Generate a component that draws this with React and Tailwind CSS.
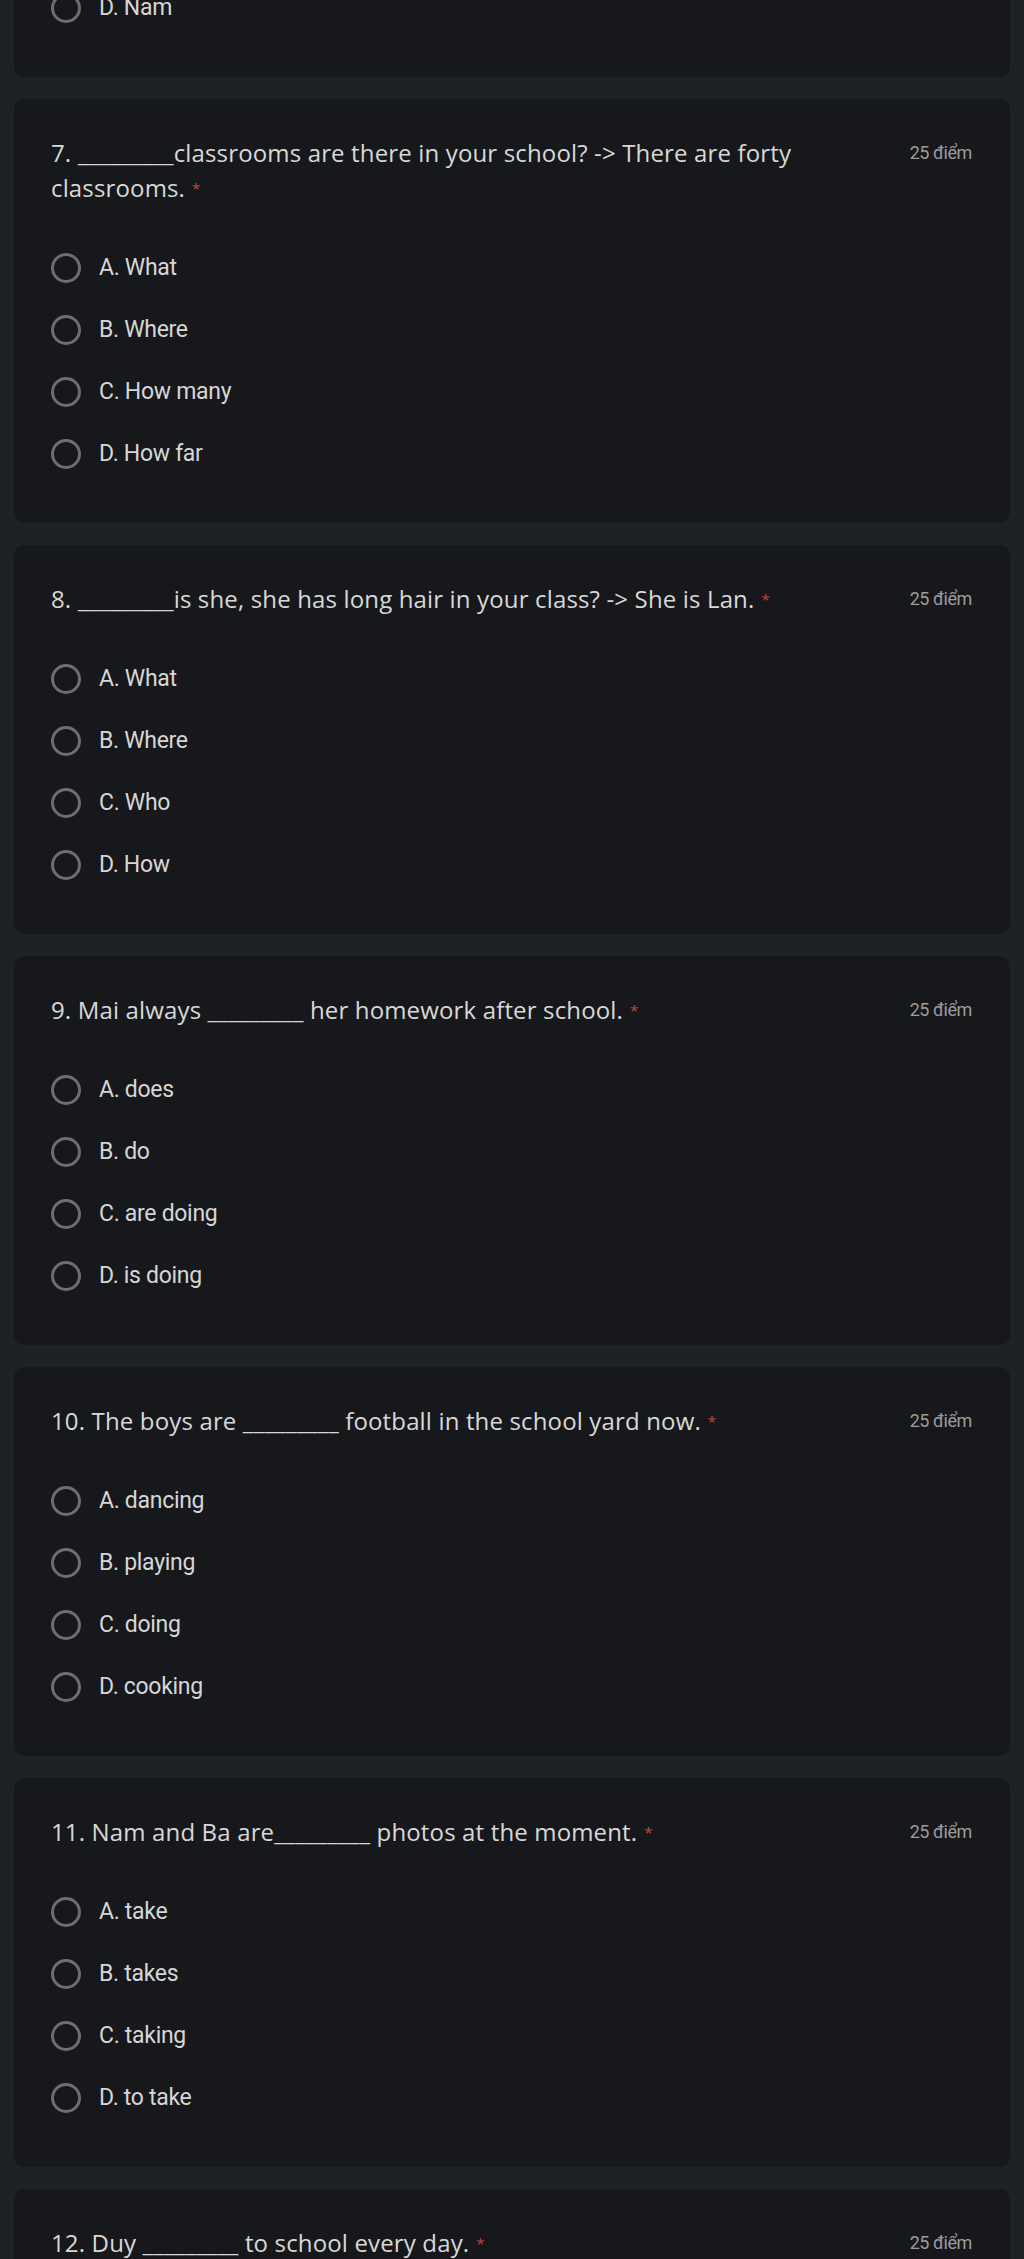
import React from 'react';

const questions = [
  {
    id: 7,
    title: '7. _________classrooms are there in your school? -> There are forty classrooms.',
    options: ['A. What', 'B. Where', 'C. How many', 'D. How far'],
  },
  {
    id: 8,
    title: '8. _________is she, she has long hair in your class? -> She is Lan.',
    options: ['A. What', 'B. Where', 'C. Who', 'D. How'],
  },
  {
    id: 9,
    title: '9. Mai always _________ her homework after school.',
    options: ['A. does', 'B. do', 'C. are doing', 'D. is doing'],
  },
  {
    id: 10,
    title: '10. The boys are _________ football in the school yard now.',
    options: ['A. dancing', 'B. playing', 'C. doing', 'D. cooking'],
  },
  {
    id: 11,
    title: '11. Nam and Ba are_________ photos at the moment.',
    options: ['A. take', 'B. takes', 'C. taking', 'D. to take'],
  },
  {
    id: 12,
    title: '12. Duy _________ to school every day.',
    options: ['A. go', 'B. goes', 'C. going', 'D. is going'],
  },
];

function Option({ label }) {
  return (
    <label className="flex items-center h-[62px] cursor-pointer">
      <span className="w-[30px] h-[30px] rounded-full border-[3px] border-[#6e6e6e] shrink-0" />
      <span className="ml-[18px] text-[23px] text-[#d6d6d6] font-['Roboto',sans-serif] tracking-[-0.3px]">
        {label}
      </span>
    </label>
  );
}

function QuestionCard({ q }) {
  return (
    <div className="bg-[#17181b] rounded-[10px] pl-[37px] pr-[38px] pt-[36px] pb-[38px]">
      <div className="flex items-start">
        <div className="flex-1 pr-[60px] text-[24px] leading-[35px] tracking-[0.15px] text-[#d8d8d8] font-['Open_Sans',sans-serif]">
          {q.title}
          <span className="ml-[7px] text-[#c0463f] text-[15px] leading-none align-[3px]">*</span>
        </div>
        <div className="w-[72px] text-right text-[18px] leading-[35px] text-[#9c9c9c] font-['Roboto',sans-serif] tracking-[-0.4px]">
          25 điểm
        </div>
      </div>
      <div className="mt-[32px] flex flex-col">
        {q.options.map(opt => (
          <Option key={opt} label={opt} />
        ))}
      </div>
    </div>
  );
}

export default function App() {
  return (
    <div className="min-h-screen bg-[#1e2224] px-[14px] pb-10 overflow-hidden">
      <div className="flex flex-col gap-[22px]">
        {/* tail of question 6 */}
        <div className="-mt-[23px] bg-[#17181b] rounded-b-[10px] pl-[37px] pb-[38px]">
          <Option label="D. Nam" />
        </div>
        {questions.map(q => (
          <QuestionCard key={q.id} q={q} />
        ))}
      </div>
    </div>
  );
}
